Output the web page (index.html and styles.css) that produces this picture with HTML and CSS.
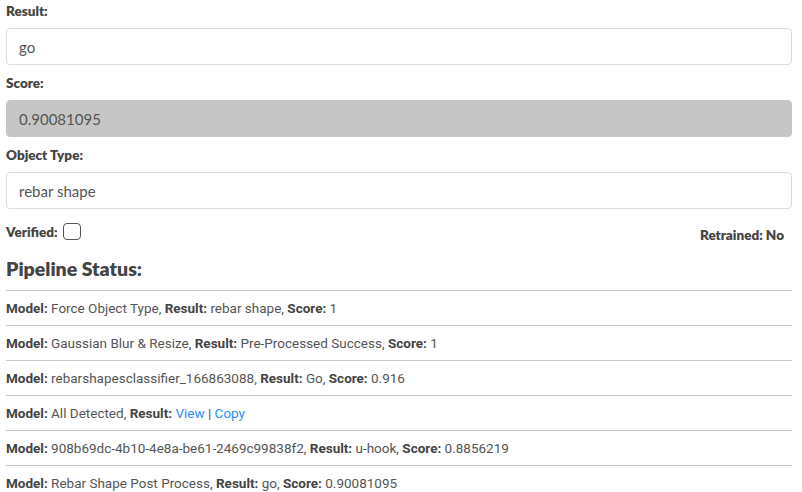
FILE: index.html
```html
<!DOCTYPE html>
<html>
<head>
<meta charset="utf-8">
<link rel="stylesheet" href="styles.css">
</head>
<body>
<div class="page">
  <div class="field">
    <div class="label">Result:</div>
    <div class="input">go</div>
  </div>
  <div class="field">
    <div class="label">Score:</div>
    <div class="input disabled">0.90081095</div>
  </div>
  <div class="field">
    <div class="label">Object Type:</div>
    <div class="input">rebar shape</div>
  </div>
  <div class="flags">
    <div class="verified"><b>Verified:</b><span class="checkbox"></span></div>
    <div class="retrained"><b>Retrained: No</b></div>
  </div>
  <h2 class="heading">Pipeline Status:</h2>
  <div class="status">
    <div class="row"><b>Model:</b> Force Object Type, <b>Result:</b> rebar shape, <b>Score:</b> 1</div>
    <div class="row"><b>Model:</b> Gaussian Blur &amp; Resize, <b>Result:</b> Pre-Processed Success, <b>Score:</b> 1</div>
    <div class="row"><b>Model:</b> rebarshapesclassifier_166863088, <b>Result:</b> Go, <b>Score:</b> 0.916</div>
    <div class="row"><b>Model:</b> All Detected, <b>Result:</b> <a class="link">View</a> | <a class="link">Copy</a></div>
    <div class="row"><b>Model:</b> 908b69dc-4b10-4e8a-be61-2469c99838f2, <b>Result:</b> u-hook, <b>Score:</b> 0.8856219</div>
    <div class="row"><b>Model:</b> Rebar Shape Post Process, <b>Result:</b> go, <b>Score:</b> 0.90081095</div>
  </div>
</div>
</body>
</html>
```
FILE: styles.css
```css
html, body {
  margin: 0;
  padding: 0;
  background: #fff;
}
.page {
  font-family: "Lato", "Source Sans Pro", sans-serif;
  color: #555;
  font-size: 14px;
  padding: 2px 10px 0 6px;
}
.field {
  margin-bottom: 9px;
}
.label {
  font-weight: 800;
  color: #444;
  font-size: 13.5px;
  line-height: 18px;
  margin-bottom: 8px;
}
.input {
  height: 37px;
  box-sizing: border-box;
  border: 1px solid #dcdcdc;
  border-radius: 4px;
  padding: 0 12px;
  display: flex;
  align-items: center;
  font-size: 15px;
  color: #555;
  background: #fff;
}
.input.disabled {
  background: #c6c6c6;
  border-color: #c6c6c6;
}
.flags {
  display: flex;
  justify-content: space-between;
  align-items: center;
  height: 28px;
  padding-right: 8px;
}
.flags b {
  color: #444;
  font-weight: 800;
  font-size: 13.5px;
}
.verified {
  display: flex;
  align-items: center;
  gap: 5px;
}
.checkbox {
  width: 18px;
  height: 17px;
  box-sizing: border-box;
  border: 1.5px solid #555;
  border-radius: 4px;
  margin-top: -2px;
}
.retrained {
  padding-top: 4px;
}
.heading {
  margin: 0;
  font-size: 19.5px;
  font-weight: 800;
  color: #444;
  line-height: 28px;
  padding: 9px 0 7px;
}
.row {
  font-family: "Roboto", sans-serif;
  font-size: 13.5px;
  border-top: 1px solid #c4c4c4;
  height: 35px;
  box-sizing: border-box;
  white-space: pre;
  line-height: 35px;
}
.row b {
  color: #444;
  font-weight: 700;
}
.link {
  color: #2b8ef5;
}
```
